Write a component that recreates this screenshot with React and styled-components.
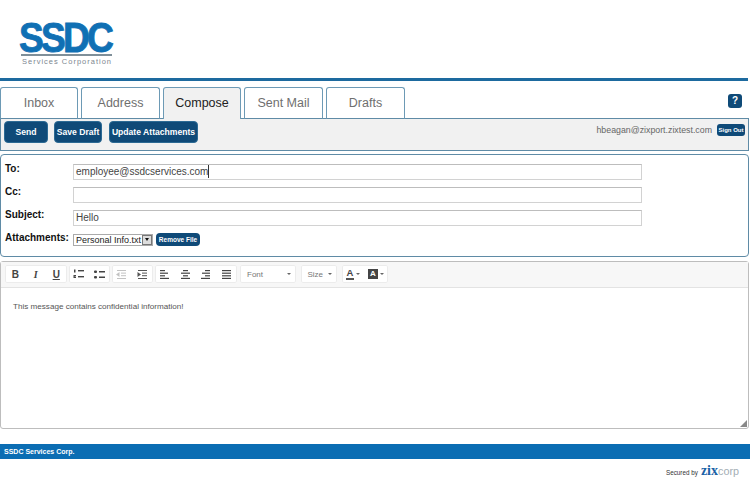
import React from 'react';
import styled, { createGlobalStyle } from 'styled-components';

const Global = createGlobalStyle`
  html, body { margin: 0; padding: 0; background: #fff; }
  body { font-family: "Liberation Sans", Arial, sans-serif; }
  * { box-sizing: border-box; }
`;
const Page = styled.div`width: 750px; height: 477px; overflow: hidden; display: flex; flex-direction: column; background: #fff;`;
const Header = styled.header`height: 81px; width: 748px; border-bottom: 3px solid #1d6a9f; padding: 20px 0 0 19px; flex: none;`;
const Logo = styled.div`width: 95px; display: flex; flex-direction: column;`;
const LogoMark = styled.div`
  font: bold 43px/35px "Liberation Sans", sans-serif; color: #1070b4; letter-spacing: -3.3px;
  -webkit-text-stroke: 0.9px #1070b4;
  width: 107px; height: 34px; white-space: nowrap; transform: scaleX(.865); transform-origin: 0 0;
`;
const LogoRule = styled.div`height: 2px; width: 91px; margin-left: 2px; background: #7f8f99;`;
const LogoSub = styled.div`font-size: 7.5px; line-height: 9px; margin-top: 1px; padding-left: 3px; color: #7d8790; letter-spacing: 1px; white-space: nowrap;`;
const TabRow = styled.div`height: 38px; width: 748px; padding-top: 6px; display: flex; position: relative; flex: none;`;
const Tab = styled.div`
  width: ${p => p.$w}px; margin-left: ${p => p.$ml}px; height: 32px;
  border: 1px solid #6d9ab5; border-bottom: ${p => p.$active ? 'none' : '1px solid #5f8ba6'};
  border-radius: 3px 3px 0 0;
  background: ${p => p.$active ? '#f1f1f1' : '#fff'};
  color: ${p => p.$active ? '#222' : '#6f6f6f'};
  display: flex; align-items: center; justify-content: center; font-size: 12.5px; padding-bottom: 1px;
  position: relative; z-index: 1;
`;
const Help = styled.div`
  position: absolute; right: 6px; top: 13px; width: 14px; height: 14px; border-radius: 3px;
  background: #0f4a78; color: #fff; font: bold 10px/14px "Liberation Sans", sans-serif; text-align: center;
`;
const ActionBar = styled.div`
  width: 749px; height: 33px; margin-top: -1px; border: 1px solid #5f8ba6; background: #f1f1f1;
  display: flex; align-items: flex-start; gap: 6px; padding: 2px 3px 0; flex: none;
`;
const DarkButton = styled.button`
  height: 22px; padding: 0; width: ${p => p.$w}px; margin-left: ${p => p.$ml || 0}px; border: 1px solid #2c6a94; border-radius: 4px; background: #0f4a78; color: #fff;
  font: bold 8.6px "Liberation Sans", sans-serif; white-space: nowrap;
`;
const UserBox = styled.div`margin-left: auto; display: flex; align-items: center; gap: 5px; margin-top: 3px;`;
const UserMail = styled.span`font-size: 8.8px; color: #666;`;
const SignOut = styled.button`
  width: 28px; height: 12px; padding: 0; border: none; border-radius: 3px; background: #0f4a78; color: #fff;
  font: bold 6px "Liberation Sans", sans-serif; white-space: nowrap;
`;
const FormPanel = styled.section`
  width: 749px; height: 103px; margin-top: 3px; border: 1px solid #5f8ba6; border-radius: 4px; padding: 5px 0 0 4px; flex: none;
  display: grid; grid-template-columns: 68px 569px; grid-auto-rows: 23px; align-content: start;
`;
const Label = styled.label`font: bold 10px/14px "Liberation Sans", sans-serif; color: #111; padding-top: 2px;`;
const Field = styled.div`
  height: 16px; width: 569px; margin-top: 4px; border: 1px solid #d2d2d2; border-top-color: #bdbdbd; background: #fff; font-size: 10px; line-height: 13px; color: #444; padding: 0 0 1px 2px;
  display: flex; align-items: center;
`;
const Caret = styled.span`display: inline-block; width: 1px; height: 13px; background: #333;`;
const AttachRow = styled.div`display: flex; align-items: center; gap: 3px; height: 13px; margin-top: 4px;`;
const Select = styled.div`
  width: 80px; height: 12px; border: 1px solid #aaa; display: flex; align-items: center; justify-content: space-between;
  font-size: 9px; color: #222; padding-left: 2px; white-space: nowrap;
`;
const SelectArrow = styled.span`
  width: 10px; height: 10px; background: #ddd; border: 1px solid #777; display: flex; align-items: center; justify-content: center; flex: none;
  &::after { content: ""; border: 2.5px solid transparent; border-top: 3px solid #111; border-bottom: 0; }
`;
const RemoveBtn = styled.button`
  width: 44px; height: 13px; padding: 0; border: none; border-radius: 4px; background: #0f4a78; color: #fff;
  font: bold 6.5px "Liberation Sans", sans-serif; white-space: nowrap;
`;
const Editor = styled.section`
  width: 749px; height: 168px; margin-top: 4px; border: 1px solid #bdbdbd; border-radius: 3px; position: relative; flex: none;
  display: flex; flex-direction: column;
`;
const EditorToolbar = styled.div`
  height: 26px; background: #f7f7f7; border-bottom: 1px solid #e3e3e3; padding: 3px 0 0 4px; display: flex; gap: 2px; align-items: flex-start; flex: none;
`;
const Group = styled.div`
  height: 18px; background: #fff; box-shadow: inset 0 0 0 1px #ececec; border-radius: 2px; display: flex; align-items: center; flex: none;
  margin-left: ${p => p.$ml || 0}px;
`;
const ToolBtn = styled.div`
  width: ${p => p.$w || 20.5}px; height: 17px; display: flex; align-items: center; justify-content: center; gap: 2px;
  color: #444; font: ${p => p.$font || 'bold 10px "Liberation Sans", sans-serif'};
  text-decoration: ${p => p.$u ? 'underline' : 'none'};
`;
const Drop = styled.div`
  width: ${p => p.$w}px; height: 17px; padding: 0 5px 0 7px; display: flex; align-items: center; justify-content: space-between; font-size: 8px; color: #777;
`;
const Caretlet = styled.span`border: 2px solid transparent; border-top: 2.5px solid #666; border-bottom: 0; display: inline-block;`;
const ColorA = styled.span`font: bold 9.5px/10px "Liberation Sans", sans-serif; color: #444; border-bottom: 2px solid ${p => p.$c}; padding: 0 1px;`;
const HighlightA = styled.span`font: bold 8px/10px "Liberation Sans", sans-serif; color: #fff; background: #444; width: 10px; height: 10px; text-align: center; display: block;`;
const Body = styled.div`flex: 1; padding: 14px 12px; font-size: 8.1px; color: #555;`;
const Grip = styled.svg`position: absolute; right: 1px; bottom: 1px;`;
const FooterBar = styled.footer`
  width: 750px; height: 15px; margin-top: 15px; background: #0b6db3; color: #fff; font: bold 7px/15px "Liberation Sans", sans-serif; padding-left: 4px; flex: none;
`;
const Secured = styled.div`
  display: flex; align-items: baseline; justify-content: flex-end; padding: 5px 11px 0 0; height: 18px; font-size: 6.3px; color: #333; gap: 3px;
`;
const ZixLogo = styled.span`font: bold 14px/14px "Liberation Serif", serif; color: #1a63a6;`;
const CorpLogo = styled.span`font: 10.8px/14px "Liberation Sans", sans-serif; color: #a3adb4; margin-left: -3px;`;

const Lines = ({ rows }) => (
  <svg width="11" height="9" viewBox="0 0 11 9" fill="#444">
    {rows.map(([x, w], i) => <rect key={i} x={x} y={i * 2.6} width={w} height="1.2" />)}
  </svg>
);
const LEFT = [[1, 5], [1, 8], [1, 5], [1, 9]];
const CENTER = [[3, 5], [1, 9], [3, 5], [1, 9]];
const RIGHT = [[5, 5], [2, 8], [5, 5], [1, 9]];
const JUST = [[1, 9], [1, 9], [1, 9], [1, 9]];
const OL = () => (
  <svg width="11" height="10" viewBox="0 0 11 10" fill="#444">
    <rect x="1" y="0.5" width="1.5" height="3" /><path d="M0.5 6h2.5v1.2h-1.4v.6h1.4v1.2H0.5z" />
    <rect x="5" y="1" width="6" height="1.4" /><rect x="5" y="7" width="6" height="1.4" />
  </svg>
);
const UL = () => (
  <svg width="11" height="9" viewBox="0 0 11 9" fill="#444">
    <rect x="0" y="0.5" width="3" height="2.5" rx="1" /><rect x="0" y="6" width="3" height="2.5" rx="1" />
    <rect x="5" y="1" width="6" height="1.5" /><rect x="5" y="6.5" width="6" height="1.5" />
  </svg>
);
const Indent = ({ off, out }) => (
  <svg width="11" height="9" viewBox="0 0 11 9" fill={off ? '#c2c2c2' : '#555'}>
    <rect x="1" y="0" width="9" height="1" /><rect x="5" y="2.6" width="5" height="1" /><rect x="5" y="5.2" width="5" height="1" /><rect x="1" y="8" width="9" height="1" />
    {out ? <path d="M0 4.4 L3.5 2 V7 Z" /> : <path d="M4 4.4 L0.5 2 V7 Z" />}
  </svg>
);

export default function App() {
  return (
    <Page>
      <Global />
      <Header>
        <Logo>
          <LogoMark>SSDC</LogoMark>
          <LogoRule />
          <LogoSub>Services Corporation</LogoSub>
        </Logo>
      </Header>
      <TabRow>
        <Tab $w={78} $ml={0}>Inbox</Tab>
        <Tab $w={79} $ml={3}>Address</Tab>
        <Tab $w={78} $ml={3} $active>Compose</Tab>
        <Tab $w={79} $ml={3}>Sent Mail</Tab>
        <Tab $w={79} $ml={3}>Drafts</Tab>
        <Help>?</Help>
      </TabRow>
      <ActionBar>
        <DarkButton $w={44}>Send</DarkButton>
        <DarkButton $w={48}>Save Draft</DarkButton>
        <DarkButton $w={89} $ml={1}>Update Attachments</DarkButton>
        <UserBox>
          <UserMail>hbeagan@zixport.zixtest.com</UserMail>
          <SignOut>Sign Out</SignOut>
        </UserBox>
      </ActionBar>
      <FormPanel>
        <Label>To:</Label>
        <Field>employee@ssdcservices.com<Caret /></Field>
        <Label>Cc:</Label>
        <Field />
        <Label>Subject:</Label>
        <Field>Hello</Field>
        <Label>Attachments:</Label>
        <AttachRow>
          <Select>Personal Info.txt<SelectArrow /></Select>
          <RemoveBtn>Remove File</RemoveBtn>
        </AttachRow>
      </FormPanel>
      <Editor>
        <EditorToolbar>
          <Group>
            <ToolBtn>B</ToolBtn>
            <ToolBtn $font='italic bold 10px "Liberation Serif", serif'>I</ToolBtn>
            <ToolBtn $u>U</ToolBtn>
          </Group>
          <Group>
            <ToolBtn><OL /></ToolBtn>
            <ToolBtn><UL /></ToolBtn>
          </Group>
          <Group>
            <ToolBtn><Indent off out /></ToolBtn>
            <ToolBtn><Indent /></ToolBtn>
          </Group>
          <Group>
            <ToolBtn><Lines rows={LEFT} /></ToolBtn>
            <ToolBtn><Lines rows={CENTER} /></ToolBtn>
            <ToolBtn><Lines rows={RIGHT} /></ToolBtn>
            <ToolBtn><Lines rows={JUST} /></ToolBtn>
          </Group>
          <Group $ml={1.5}><Drop $w={56}>Font<Caretlet /></Drop></Group>
          <Group $ml={2.5}><Drop $w={36}>Size<Caretlet /></Drop></Group>
          <Group $ml={3}>
            <ToolBtn $w={23}><ColorA $c="#555">A</ColorA><Caretlet /></ToolBtn>
            <ToolBtn $w={23}><HighlightA>A</HighlightA><Caretlet /></ToolBtn>
          </Group>
        </EditorToolbar>
        <Body>This message contains confidential information!</Body>
        <Grip width="8" height="8" viewBox="0 0 8 8"><path d="M8 1 V8 H1 Z" fill="#888" /></Grip>
      </Editor>
      <FooterBar>SSDC Services Corp.</FooterBar>
      <Secured>Secured by <ZixLogo>zix</ZixLogo><CorpLogo>corp</CorpLogo></Secured>
    </Page>
  );
}
